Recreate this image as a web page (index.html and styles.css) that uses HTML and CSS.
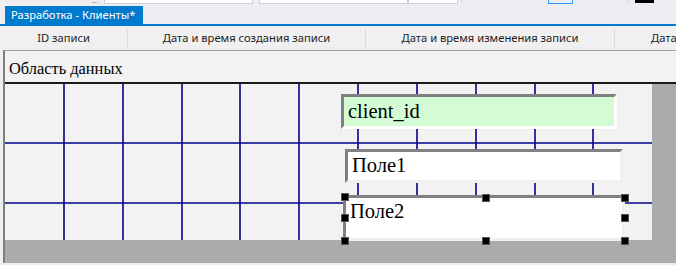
FILE: index.html
```html
<!DOCTYPE html>
<html lang="ru">
<head>
    <meta charset="UTF-8">
    <title>Разработка - Клиенты</title>
    <link rel="stylesheet" href="styles.css">
</head>
<body>
    <div class="toolstrip">
        <span class="grip"></span>
        <span class="combo combo-wide"></span>
        <span class="combo combo-mid"></span>
        <span class="combo combo-small"></span>
        <span class="tool-sep"></span>
        <span class="tool-btn"></span>
        <span class="tool-sep tool-sep-far"></span>
        <span class="tool-color"></span>
    </div>

    <div class="tabs">
        <div class="tab">Разработка - Клиенты*</div>
    </div>

    <div class="columns">
        <div class="col col-id">ID записи</div>
        <div class="col col-created">Дата и время создания записи</div>
        <div class="col col-changed">Дата и время изменения записи</div>
        <div class="col col-last">Дата</div>
    </div>

    <div class="designer">
        <div class="section-title">Область данных</div>
        <div class="surface">
            <div class="canvas">
                <svg class="grid" width="647" height="156">
                    <g stroke="#00008f" stroke-width="1.6">
                        <line x1="59" y1="0" x2="59" y2="156"/>
                        <line x1="118" y1="0" x2="118" y2="156"/>
                        <line x1="177" y1="0" x2="177" y2="156"/>
                        <line x1="235" y1="0" x2="235" y2="156"/>
                        <line x1="294" y1="0" x2="294" y2="156"/>
                        <line x1="353" y1="0" x2="353" y2="156"/>
                        <line x1="412" y1="0" x2="412" y2="156"/>
                        <line x1="471" y1="0" x2="471" y2="156"/>
                        <line x1="530" y1="0" x2="530" y2="156"/>
                        <line x1="588" y1="0" x2="588" y2="156"/>
                        <line x1="0" y1="59" x2="647" y2="59"/>
                        <line x1="0" y1="119" x2="647" y2="119"/>
                    </g>
                </svg>

                <div class="field field-key">client_id</div>
                <div class="field field-one">Поле1</div>
                <div class="field field-two selected">
                    Поле2
                    <span class="handle h-tl"></span>
                    <span class="handle h-tm"></span>
                    <span class="handle h-tr"></span>
                    <span class="handle h-ml"></span>
                    <span class="handle h-mr"></span>
                    <span class="handle h-bl"></span>
                    <span class="handle h-bm"></span>
                    <span class="handle h-br"></span>
                </div>
            </div>
        </div>
    </div>
</body>
</html>
```

FILE: styles.css
```css
body {
    margin: 0;
    width: 676px;
    height: 265px;
    overflow: hidden;
    background-color: #eeeef2;
    font-family: "Segoe UI", "Noto Sans", "Liberation Sans", sans-serif;
    font-size: 11.2px;
    color: #1e1e1e;
}

/* remains of the toolbar above the tab */
.toolstrip {
    display: flex;
    height: 4px;
    overflow: hidden;
}

.toolstrip span {
    display: block;
    height: 3px;
}

.grip {
    width: 6px;
    margin-left: 92px;
    border-bottom: 1px dotted #9a9aa0;
    height: 2px !important;
}

.combo {
    background-color: #fff;
    border: 1px solid #cccedb;
    border-top: none;
}

.combo-wide {
    width: 147px;
    margin-left: 6px;
}

.combo-mid {
    width: 147px;
    margin-left: 6px;
}

.combo-small {
    width: 48px;
}

.tool-sep {
    width: 1px;
    margin-left: 3px;
    background-color: #cccedb;
}

.tool-btn {
    width: 23px;
    margin-left: 86px;
    border: 1px solid #3399ff;
    border-top: none;
}

.tool-sep-far {
    margin-left: 55px;
}

.tool-color {
    width: 19px;
    margin-left: 6px;
    background-color: #000;
}

/* document tab */
.tabs {
    display: flex;
    height: 22px;
    padding-left: 5px;
    box-sizing: border-box;
    align-items: flex-end;
    border-bottom: 2px solid #007acc;
}

.tab {
    height: 18px;
    line-height: 17px;
    padding: 0 6px;
    width: 138px;
    box-sizing: border-box;
    background-color: #007acc;
    color: #fff;
    white-space: nowrap;
}

/* column header strip */
.columns {
    display: flex;
    height: 24px;
    align-items: center;
    background-color: #f0f0f0;
    overflow: hidden;
    white-space: nowrap;
}

.col {
    flex: none;
    height: 19px;
    line-height: 18px;
    text-align: center;
    border-right: 1px solid #dadada;
    box-sizing: border-box;
}

.col-id {
    width: 128px;
}

.col-created {
    width: 238px;
}

.col-changed {
    width: 249px;
}

.col-last {
    border-right: none;
    padding-left: 36px;
    text-align: left;
}

/* report designer area */
.designer {
    margin-left: 3px;
    border-top: 1px solid #a0a0a0;
    border-left: 2px solid #7f7f7f;
}

.section-title {
    height: 31px;
    line-height: 36px;
    padding-left: 4px;
    background-color: #f2f2f2;
    border-bottom: 2px solid #1a1a1a;
    font-family: "Liberation Serif", "Times New Roman", serif;
    font-size: 16.4px;
    color: #000;
}

.surface {
    height: 179px;
    background-color: #ababab;
}

.canvas {
    position: relative;
    width: 647px;
    height: 156px;
    background-color: #f2f2f2;
}

.grid {
    display: block;
}

.field {
    position: absolute;
    box-sizing: border-box;
    border: 3px solid;
    border-color: #808080 #fff #fff #808080;
    padding-left: 4px;
    font-family: "Liberation Serif", "Times New Roman", serif;
    font-size: 20.5px;
    color: #000;
    background-color: #fff;
}

.field-key {
    left: 336px;
    top: 10px;
    width: 276px;
    height: 35px;
    line-height: 28px;
    background-color: #d4fcd4;
}

.field-one {
    left: 340px;
    top: 65px;
    width: 278px;
    height: 34px;
    line-height: 27px;
    border-color: #808080 #f0f0f0 #f0f0f0 #808080;
}

.field-two {
    left: 338px;
    top: 111px;
    width: 282px;
    height: 46px;
    line-height: 26px;
    border-color: #808080 #f0f0f0 #f0f0f0 #808080;
}

.handle {
    position: absolute;
    width: 8px;
    height: 8px;
    box-sizing: border-box;
    background-color: #000;
    border: 1px solid #555;
}

.h-tl { left: -5px; top: -5px; }
.h-tm { left: 136px; top: -4px; }
.h-tr { right: -7px; top: -4px; }
.h-ml { left: -5px; top: 16px; }
.h-mr { right: -7px; top: 16px; }
.h-bl { left: -5px; bottom: -7px; }
.h-bm { left: 136px; bottom: -7px; }
.h-br { right: -7px; bottom: -7px; }
```
